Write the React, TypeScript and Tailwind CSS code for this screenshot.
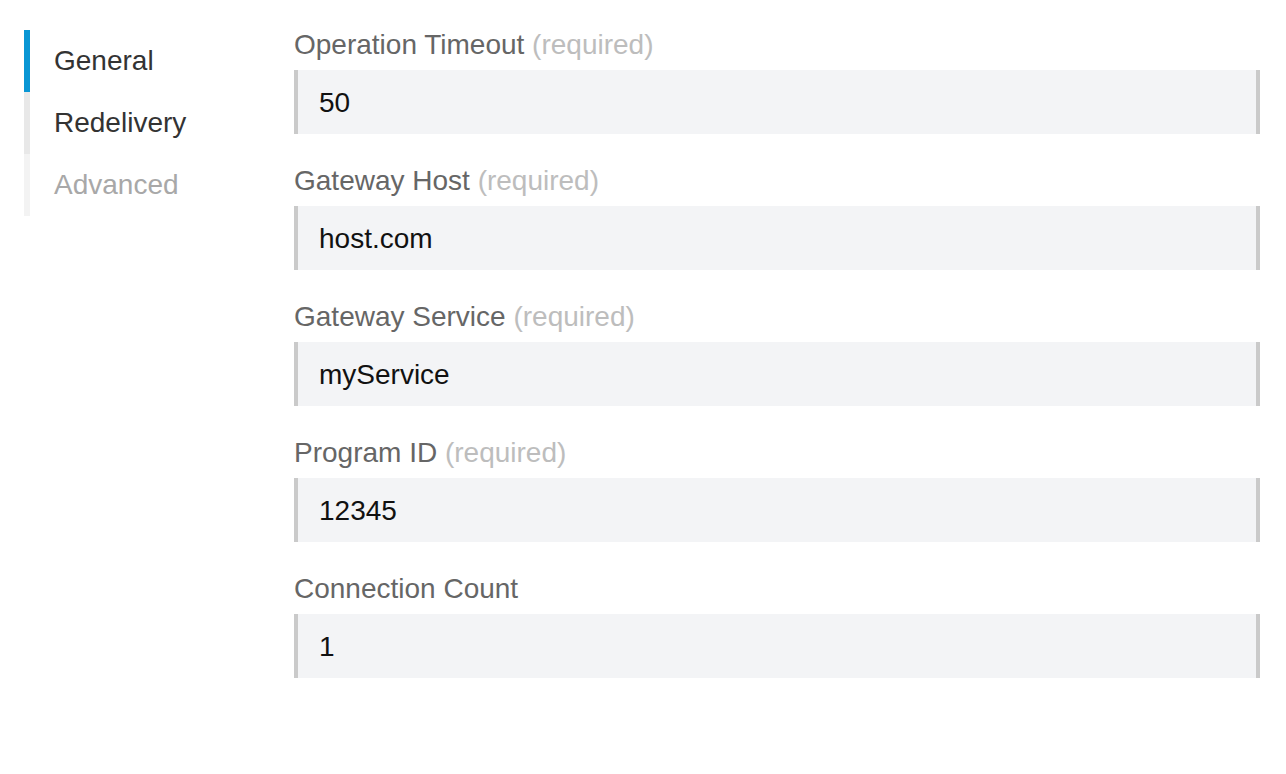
import { useState } from 'react';

const tabs = [
  { id: 'general', label: 'General', bar: 'border-[#0996d4]', text: 'text-[#333333]' },
  { id: 'redelivery', label: 'Redelivery', bar: 'border-[#e8e8e8]', text: 'text-[#333333]' },
  { id: 'advanced', label: 'Advanced', bar: 'border-[#f3f3f3]', text: 'text-[#a8a8a8]' },
];

const fields = [
  { id: 'timeout', label: 'Operation Timeout', required: true, value: '50' },
  { id: 'host', label: 'Gateway Host', required: true, value: 'host.com' },
  { id: 'service', label: 'Gateway Service', required: true, value: 'myService' },
  { id: 'program', label: 'Program ID', required: true, value: '12345' },
  { id: 'count', label: 'Connection Count', required: false, value: '1' },
];

const App = () => {
  const [values, setValues] = useState<Record<string, string>>(
    Object.fromEntries(fields.map((f) => [f.id, f.value]))
  );

  return (
    <div className="min-h-screen w-full bg-white font-['Liberation_Sans',Arial,sans-serif] flex pt-[25px] pr-[26px]">
      <nav className="w-[294px] pl-6 pt-[5px] shrink-0">
        {tabs.map((tab) => (
          <div
            key={tab.id}
            className={`h-[62px] flex items-center border-l-[6px] pl-6 text-[28px] cursor-pointer ${tab.bar} ${tab.text}`}
          >
            {tab.label}
          </div>
        ))}
      </nav>
      <main className="flex-1 flex flex-col">
        {fields.map((field) => (
          <div key={field.id} className="mb-[27px]">
            <label className="block text-[28px] leading-[40px] text-[#666666] mb-[5px]">
              {field.label}
              {field.required && <span className="text-[#bdbdbd]"> (required)</span>}
            </label>
            <input
              value={values[field.id]}
              onChange={(e) => setValues({ ...values, [field.id]: e.target.value })}
              className="w-full h-[64px] bg-[#f3f4f6] border-x-4 border-[#cacaca] pl-[21px] pr-5 pt-[2px] text-[28px] text-[#111111] outline-none"
            />
          </div>
        ))}
      </main>
    </div>
  );
};

export default App;
